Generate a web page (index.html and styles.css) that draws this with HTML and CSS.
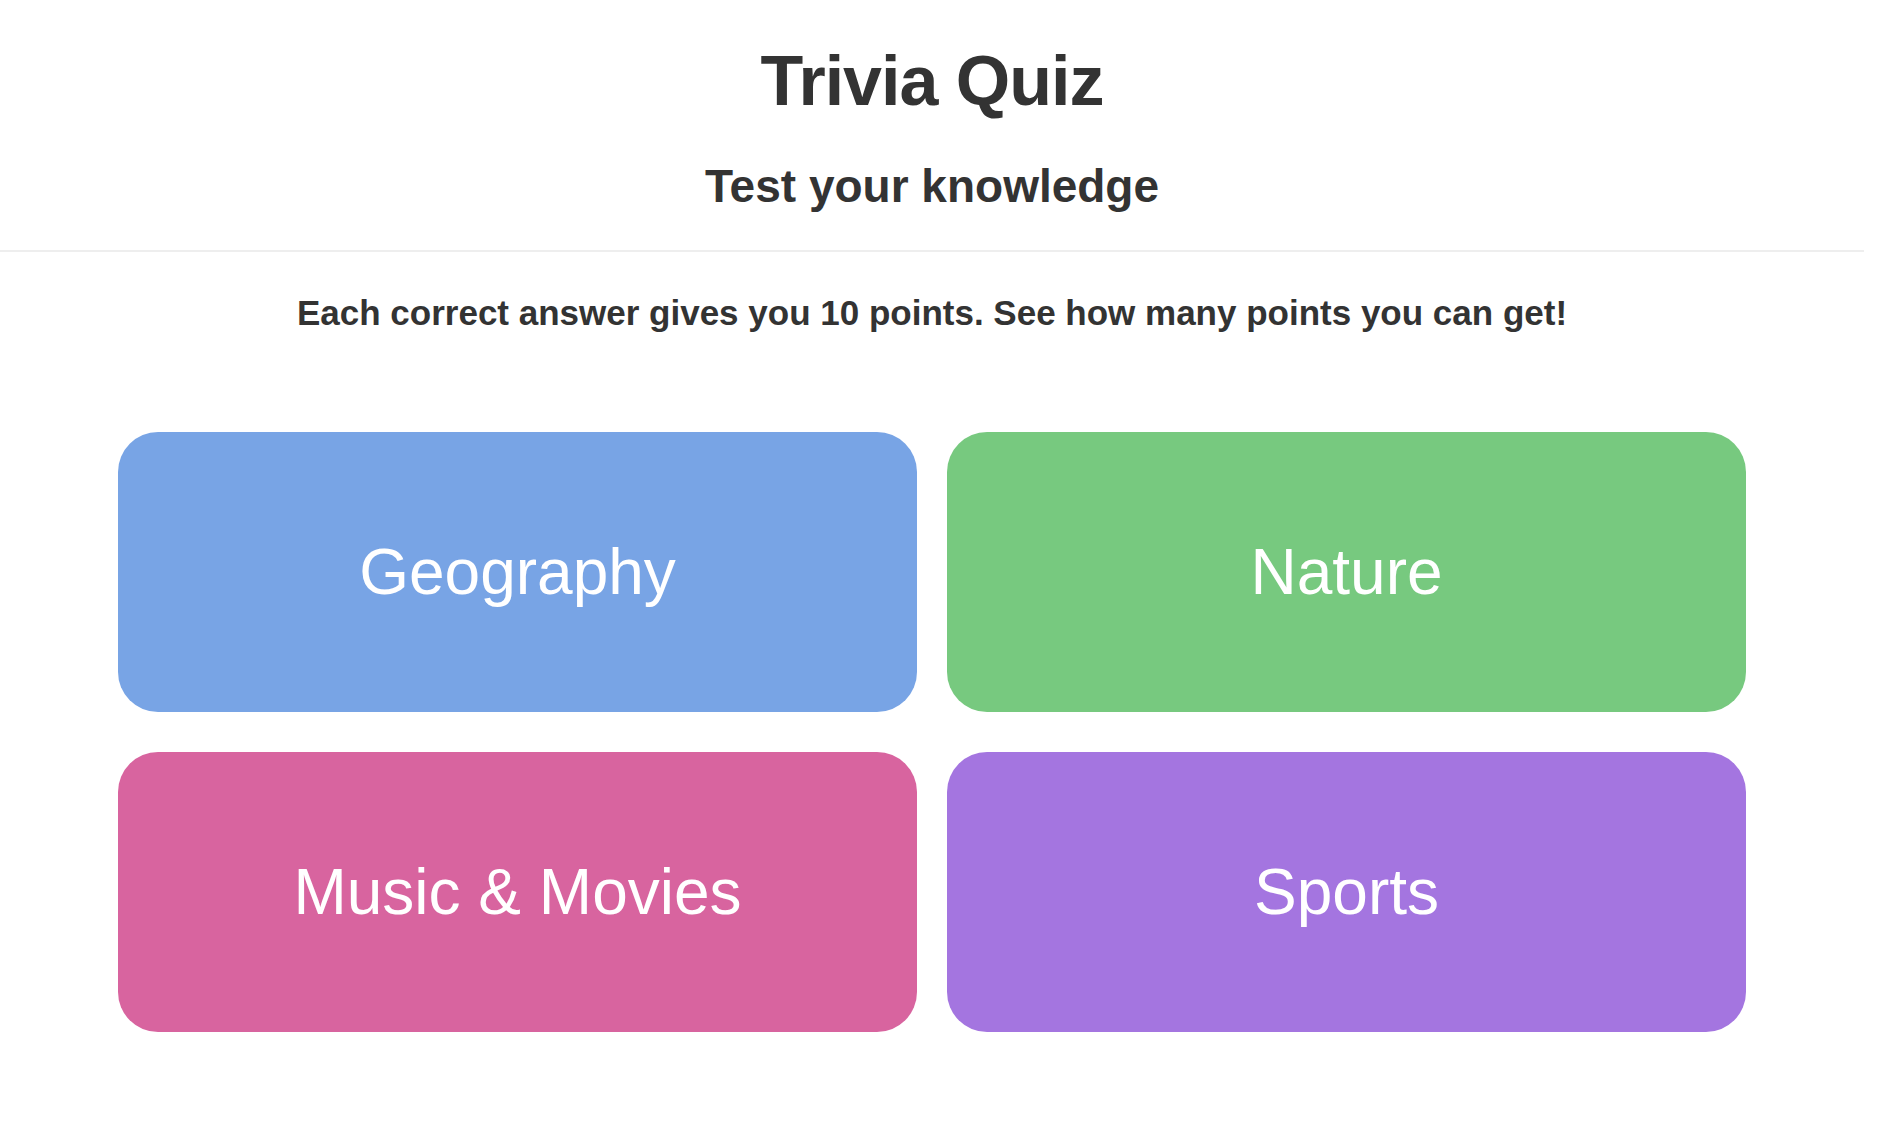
FILE: index.html
```html
<!DOCTYPE html>
<html lang="en">
<head>
<meta charset="utf-8">
<title>Trivia Quiz</title>
<link rel="stylesheet" href="styles.css">
</head>
<body>
<div class="page">
  <header class="header">
    <h1 class="title">Trivia Quiz</h1>
    <h2 class="subtitle">Test your knowledge</h2>
  </header>
  <p class="intro">Each correct answer gives you 10 points. See how many points you can get!</p>
  <div class="grid">
    <button class="card card-blue">Geography</button>
    <button class="card card-green">Nature</button>
    <button class="card card-pink">Music &amp; Movies</button>
    <button class="card card-purple">Sports</button>
  </div>
</div>
</body>
</html>
```
FILE: styles.css
```css
html, body {
  margin: 0;
  padding: 0;
  background: #ffffff;
}
body {
  font-family: "Liberation Sans", Arial, Helvetica, sans-serif;
  color: #333333;
}
.page {
  width: 1864px;
}
.header {
  padding: 41px 0 38px;
  border-bottom: 2px solid #eeeeee;
  text-align: center;
}
.title {
  margin: 0;
  font-size: 70px;
  line-height: 80px;
  font-weight: 700;
  letter-spacing: -1px;
}
.subtitle {
  margin: 39px 0 0;
  font-size: 46px;
  line-height: 52px;
  font-weight: 700;
}
.intro {
  margin: 41px 0 0;
  text-align: center;
  font-size: 35px;
  line-height: 40px;
  font-weight: 700;
}
.grid {
  display: grid;
  grid-template-columns: 1fr 1fr;
  column-gap: 30px;
  row-gap: 40px;
  margin: 99px 0 0;
  padding: 0 118px;
}
.card {
  height: 280px;
  border: none;
  border-radius: 40px;
  display: flex;
  align-items: center;
  justify-content: center;
  font-family: "Liberation Sans", Arial, Helvetica, sans-serif;
  font-size: 64px;
  color: #ffffff;
  cursor: pointer;
}
.card-blue { background: #78a4e5; }
.card-green { background: #77c97f; }
.card-pink { background: #d8649f; }
.card-purple { background: #a475e0; }
```
